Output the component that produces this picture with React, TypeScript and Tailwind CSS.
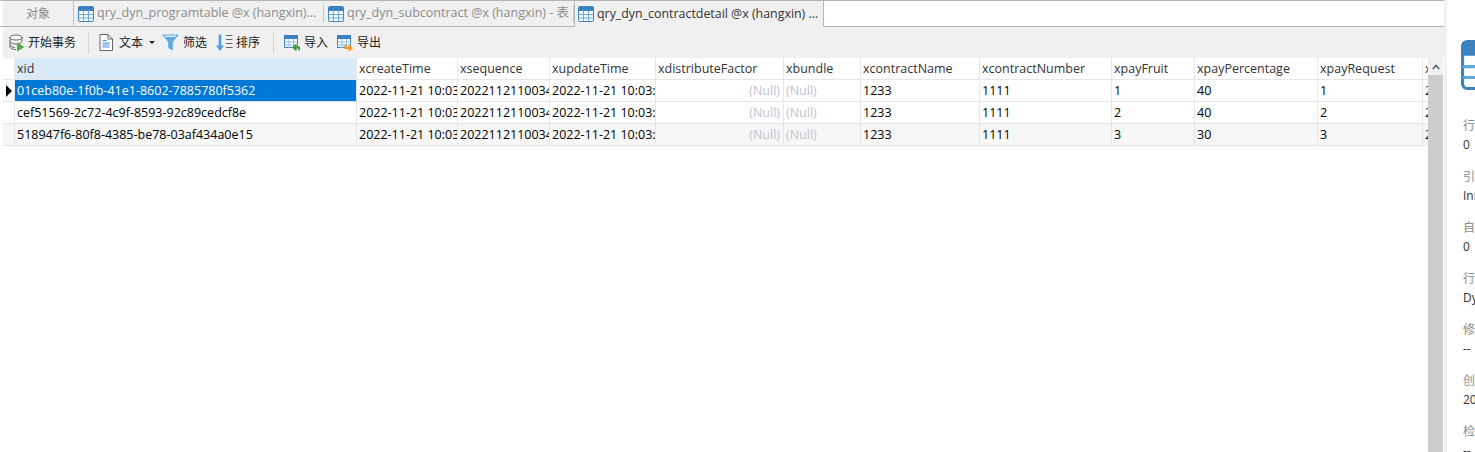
const font = { fontFamily: '"Open Sans", "Noto Sans CJK SC", sans-serif' };

const columns = [
  { name: 'xid', width: 'w-[342px]' },
  { name: 'xcreateTime', width: 'w-[101px]' },
  { name: 'xsequence', width: 'w-[92px]' },
  { name: 'xupdateTime', width: 'w-[106px]' },
  { name: 'xdistributeFactor', width: 'w-[128px]' },
  { name: 'xbundle', width: 'w-[77px]' },
  { name: 'xcontractName', width: 'w-[119px]' },
  { name: 'xcontractNumber', width: 'w-[132px]' },
  { name: 'xpayFruit', width: 'w-[83px]' },
  { name: 'xpayPercentage', width: 'w-[123px]' },
  { name: 'xpayRequest', width: 'w-[105px]' },
  { name: 'xpayTime', width: 'w-[6px]' },
];

const rows = [
  ['01ceb80e-1f0b-41e1-8602-7885780f5362', '1', '40'],
  ['cef51569-2c72-4c9f-8593-92c89cedcf8e', '2', '40'],
  ['518947f6-80f8-4385-be78-03af434a0e15', '3', '30'],
];

const details = [
  ['行数', '0'],
  ['引擎', 'InnoDB'],
  ['自动递增', '0'],
  ['行格式', 'Dynamic'],
  ['修改日期', '--'],
  ['创建日期', '2022-11-21'],
  ['检查时间', '--'],
];

function TableIcon({ className }: { className: string }) {
  return (
    <svg viewBox="0 0 16 16" className={className}>
      <rect x="0.5" y="0.5" width="15" height="15" rx="1.5" fill="#fff" stroke="#3b83c0" />
      <path d="M0.500 5V2a1.500 1.500 0 0 1 1.500-1.500h12a1.500 1.500 0 0 1 1.500 1.500v3z" fill="#3b83c0" />
      <path d="M0.500 8.500h15M0.500 12h15M5.500 4v11.500M10.500 4v11.500" stroke="#62a8e0" fill="none" />
    </svg>
  );
}

function SmallTable({ arrow }: { arrow: 'green' | 'orange' }) {
  return (
    <svg viewBox="0 0 16 16" className="w-4 h-4 shrink-0">
      <rect x="0.5" y="0.5" width="13" height="12" fill="#fff" stroke="#3b83c0" />
      <rect x="0.5" y="0.5" width="13" height="3.5" fill="#3b83c0" />
      <path d="M0.5 7h13M0.5 10h13M5 4v9M9.5 4v9" stroke="#8dbde6" fill="none" />
      {arrow === 'green' ? (
        <path d="M15.500 15.500v-3h-5M12.500 9.800l-3 2.700 3 2.700" stroke="#3f9b3a" strokeWidth="2" fill="none" />
      ) : (
        <path d="M8.500 9.500v3.500h5M11.500 10.600l3 2.600-3 2.600" stroke="#f09a1f" strokeWidth="2" fill="none" />
      )}
    </svg>
  );
}

function ToolButton({ icon, label, className }: { icon: React.ReactNode; label: string; className?: string }) {
  return (
    <div className={`flex items-center gap-[3px] ${className ?? ''}`}>
      {icon}
      <span className="text-[12px] text-[#222] whitespace-nowrap">{label}</span>
    </div>
  );
}

function Tab({ label, width, active }: { label: string; width: string; active?: boolean }) {
  return (
    <div className={`${width} flex items-center gap-[3px] shrink-0 overflow-hidden bg-[#f0f0f0] ${active ? 'h-[26px] pl-[3px] border-x border-[#b8b8b8]' : 'h-full pl-[4px]'}`}>
      <TableIcon className="w-4 h-4 shrink-0" />
      <span className={`flex-1 min-w-0 overflow-hidden whitespace-nowrap ${active ? 'text-[12.400px] text-[#333]' : 'text-[12.500px] text-[#8c8c8c]'}`}>{label}</span>
      {!active && <div className="w-px h-[17px] bg-[#c4c4c4] shrink-0" />}
    </div>
  );
}

function Cell({ width, children, className }: { width: string; children?: React.ReactNode; className?: string }) {
  return (
    <div className={`${width} shrink-0 h-full border-r border-b border-[#e6e6e6] pl-[2px] pt-px overflow-hidden whitespace-nowrap flex items-center ${className ?? ''}`}>
      {children}
    </div>
  );
}

export default function App() {
  return (
    <div className="w-[1475px] h-[452px] overflow-hidden flex bg-white" style={font}>
      <div className="w-[1444px] shrink-0 flex flex-col border-t border-[#b4b4b4]">
        {/* tabs */}
        <div className="h-[26px] shrink-0 flex pl-[3px] border-b border-[#b4b4b4]">
          <div className="w-[71px] h-full bg-[#f0f0f0] border-r border-[#c4c4c4] flex items-center justify-center text-[12px] text-[#8c8c8c] shrink-0">
            对象
          </div>
          <div className="flex h-full items-start">
            <Tab label="qry_dyn_programtable @x (hangxin)..." width="w-[250px]" />
            <Tab label="qry_dyn_subcontract @x (hangxin) - 表" width="w-[250px]" />
            <Tab label="qry_dyn_contractdetail @x (hangxin) ..." width="w-[250px]" active />
          </div>
        </div>

        {/* toolbar */}
        <div className="h-[31px] shrink-0 flex items-center bg-[#f0f0f0] ml-[3px] pl-[6px]">
          <ToolButton
            label="开始事务"
            icon={
              <svg viewBox="0 0 16 18" className="w-4 h-[18px] shrink-0">
                <ellipse cx="7" cy="3.500" rx="6" ry="2.500" fill="#fff" stroke="#666" />
                <path d="M1 3.500v9.500c0 1.400 2.700 2.500 6 2.500M13 3.500v4M1 7.500c0 1.400 2.700 2.500 6 2.500s6-1.100 6-2.500M1 11c0 1.400 2.700 2.500 5 2.500" fill="none" stroke="#666" />
                <path d="M8 8.500l7.500 4.500-7.500 4.500z" fill="#4fae3c" />
              </svg>
            }
          />
          <div className="w-px h-[22px] bg-[#d4d4d4] ml-[12px] mr-[10px]" />
          <ToolButton
            label="文本"
            className="gap-[6px]"
            icon={
              <svg viewBox="0 0 14 17" className="w-[14px] h-[17px] shrink-0">
                <path d="M1 .5h8l4.500 4.500v11.500H1z" fill="#fff" stroke="#666" />
                <path d="M9 .5v4.500h4.500" fill="none" stroke="#666" />
                <path d="M3.500 6.500h4M3.500 9h7M3.500 11h7M3.500 13h7" stroke="#3f93d8" />
              </svg>
            }
          />
          <div className="ml-[6px] w-0 h-0 border-x-[3px] border-x-transparent border-t-[3px] border-t-[#222]" />
          <ToolButton
            label="筛选"
            className="ml-[7px] gap-[4px]"
            icon={
              <svg viewBox="0 0 17 17" className="w-[17px] h-[17px] shrink-0">
                <path d="M0 .5h17l-6.200 7.500v8.500l-4.600-2.500v-6z" fill="#62a8e0" />
                <path d="M3 2.200h11" stroke="#d8ebfa" strokeWidth="1.500" />
              </svg>
            }
          />
          <ToolButton
            label="排序"
            className="ml-[9px] gap-[2px]"
            icon={
              <svg viewBox="0 0 17 18" className="w-[17px] h-[18px] shrink-0">
                <path d="M4 .5v13" stroke="#4f9be0" strokeWidth="2.500" />
                <path d="M0 11.500h8l-4 5.500z" fill="#4f9be0" />
                <path d="M10 1.500h6.500M10 5.500h6.500M10 9.500h6.500M10 13.500h6.500" stroke="#666" />
              </svg>
            }
          />
          <div className="w-px h-[22px] bg-[#d4d4d4] ml-[13px] mr-[10px]" />
          <ToolButton label="导入" className="gap-[4px]" icon={<SmallTable arrow="green" />} />
          <ToolButton label="导出" className="gap-[4px] ml-[9px]" icon={<SmallTable arrow="orange" />} />
        </div>

        {/* grid */}
        <div className="flex-1 flex min-h-0">
          <div className="flex-1 min-w-0 overflow-hidden pl-[3px] bg-white">
            <div className="h-[22px] flex text-[12.500px] text-[#333]">
              <Cell width="w-[12px]" className="bg-white" />
              {columns.map((c, i) => (
                <Cell key={c.name} width={c.width} className={i === 0 ? 'bg-[#d9ebf9]' : 'bg-white'}>
                  {c.name}
                </Cell>
              ))}
            </div>
            {rows.map((r, i) => (
              <div key={r[0]} className={`h-[22px] flex text-[12.500px] text-black ${i === 2 ? 'bg-[#f7f7f7]' : 'bg-white'}`}>
                <Cell width="w-[12px]" className="pl-[3px]">
                  {i === 0 && <div className="w-0 h-0 border-y-[6px] border-y-transparent border-l-[6px] border-l-black" />}
                </Cell>
                <Cell width={columns[0].width} className={i === 0 ? 'bg-[#0078d7] text-white' : ''}>{r[0]}</Cell>
                <Cell width={columns[1].width}>2022-11-21 10:03:24</Cell>
                <Cell width={columns[2].width}>20221121100345</Cell>
                <Cell width={columns[3].width}>2022-11-21 10:03:24</Cell>
                <Cell width={columns[4].width} className="justify-end pr-[3px] text-[#c5c0d4]">(Null)</Cell>
                <Cell width={columns[5].width} className="text-[#c5c0d4]">(Null)</Cell>
                <Cell width={columns[6].width}>1233</Cell>
                <Cell width={columns[7].width}>1111</Cell>
                <Cell width={columns[8].width}>{r[1]}</Cell>
                <Cell width={columns[9].width}>{r[2]}</Cell>
                <Cell width={columns[10].width}>{r[1]}</Cell>
                <Cell width={columns[11].width}>2022</Cell>
              </div>
            ))}
          </div>
          <div className="w-[15px] shrink-0 bg-[#f0f0f0] flex flex-col mr-px">
            <div className="h-[17px] shrink-0 flex items-center justify-center">
              <svg viewBox="0 0 8 6" className="w-2 h-[6px]">
                <path d="M.8 5L4 1.500 7.200 5" stroke="#606060" strokeWidth="1.600" fill="none" />
              </svg>
            </div>
            <div className="flex-1 bg-[#cdcdcd]" />
          </div>
        </div>
      </div>

      {/* info panel */}
      <div className="flex-1 min-w-0 border-l-[3px] border-[#f0f0f0] pl-[16px] overflow-hidden">
        <div className="mt-[40px] -ml-[2px] w-[50px] h-[50px]">
          <TableIcon className="w-[50px] h-[50px]" />
        </div>
        <div className="mt-[26px] flex flex-col gap-[13px] w-[120px] text-[12px]">
          {details.map(([label, value]) => (
            <div key={label} className="leading-[19px] whitespace-nowrap">
              <div className="text-[#8a8a8a]">{label}</div>
              <div className="text-[#333]">{value}</div>
            </div>
          ))}
        </div>
      </div>
    </div>
  );
}
